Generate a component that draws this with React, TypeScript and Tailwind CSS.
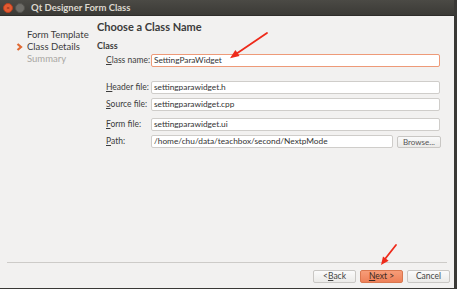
import React from 'react';

const font = { fontFamily: 'Lato, "Noto Sans", "DejaVu Sans", sans-serif' };

const Mn: React.FC<{ k: string; rest: string }> = ({ k, rest }) => (
  <span>
    <span className="underline underline-offset-1">{k}</span>
    {rest}
  </span>
);

interface RowProps {
  label: React.ReactNode;
  value: string;
  focused?: boolean;
  mt: string;
  short?: boolean;
}

const Row: React.FC<RowProps> = ({ label, value, focused, mt, short }) => (
  <div className={`flex items-center h-[13px] ${mt}`}>
    <div className="w-[54px] pl-[9px] text-[8.5px] text-[#3c3c3c] leading-none whitespace-nowrap">{label}</div>
    <div
      className={`h-[13px] flex items-center pl-[2px] bg-white rounded-[2px] text-[8.3px] text-[#333] leading-none whitespace-nowrap overflow-hidden ${
        short ? 'w-[242px]' : 'w-[289px]'
      } ${focused ? 'border border-[#ee9a78]' : 'border border-[#cfcdca]'}`}
    >
      {value}
    </div>
    {short && (
      <div className="ml-[4px] w-[44px] h-[12px] flex items-center justify-center rounded-[2px] border border-[#c9c7c4] bg-gradient-to-b from-[#fafafa] to-[#ebeae8] text-[8px] text-[#555] leading-none">
        Browse...
      </div>
    )}
  </div>
);

const Btn: React.FC<{ children: React.ReactNode; primary?: boolean }> = ({ children, primary }) => (
  <div
    className={`w-[43px] h-[13px] flex items-center justify-center rounded-[2px] text-[8.5px] leading-none ${
      primary
        ? 'border border-[#d9774f] bg-gradient-to-b from-[#f79c78] to-[#ee8159] text-[#3a2a22]'
        : 'border border-[#c9c7c4] bg-gradient-to-b from-[#fbfbfb] to-[#ebeae8] text-[#444]'
    }`}
  >
    {children}
  </div>
);

export default function App() {
  return (
    <div className="w-[457px] h-[289px] bg-[#3a3936] relative overflow-hidden" style={font}>
      <div className="w-[454px] h-[288px] flex flex-col bg-[#f2f1f0]">
        {/* title bar */}
        <div className="h-[16px] flex items-center bg-gradient-to-b from-[#4b4a45] to-[#3b3a36] border-b border-[#2e2d2a]">
          <div className="ml-[3px] w-[10px] h-[10px] rounded-full bg-[#e45b32] border border-[#b8401f] flex items-center justify-center text-[6px] text-[#6b2010] leading-none">
            ×
          </div>
          <div className="ml-[2px] w-[10px] h-[10px] rounded-full bg-[#6e6d68] border border-[#55544f]" />
          <div className="ml-[6px] text-[9.5px] font-bold text-[#dcd8cf] leading-none">Qt Designer Form Class</div>
        </div>

        <div className="flex flex-1">
          {/* side list */}
          <div className="w-[97px] pt-[13px] text-[9.5px] leading-[12px]">
            <div className="pl-[27px] text-[#3c3c3c]">Form Template</div>
            <div className="flex items-center text-[#3c3c3c]">
              <svg width="27" height="12" viewBox="0 0 27 12">
                <path d="M17.5 3 L21 6 L17.5 9" fill="none" stroke="#e06a33" strokeWidth="2.2" />
              </svg>
              Class Details
            </div>
            <div className="pl-[27px] text-[#a9a7a3]">Summary</div>
          </div>

          {/* content */}
          <div className="flex-1 pt-[4px]">
            <div className="text-[11px] font-bold text-[#3c3c3c] leading-[14px]">Choose a Class Name</div>
            <div className="mt-[6px] text-[9px] font-bold text-[#3c3c3c] leading-[12px]">Class</div>
            <Row mt="mt-[2px]" label={<Mn k="C" rest="lass name:" />} value="SettingParaWidget" focused />
            <Row mt="mt-[14px]" label={<Mn k="H" rest="eader file:" />} value="settingparawidget.h" />
            <Row mt="mt-[4px]" label={<Mn k="S" rest="ource file:" />} value="settingparawidget.cpp" />
            <Row mt="mt-[7px]" label={<Mn k="F" rest="orm file:" />} value="settingparawidget.ui" />
            <Row mt="mt-[4px]" label={<Mn k="P" rest="ath:" />} value="/home/chu/data/teachbox/second/NextpMode" short />
          </div>
        </div>

        {/* footer */}
        <div className="mx-[7px] h-px bg-[#cdcbc8]" />
        <div className="h-[25px] flex items-start justify-end gap-[4px] pt-[7px] pr-[4px]">
          <Btn>
            {'< '}
            <Mn k="B" rest="ack" />
          </Btn>
          <Btn primary>
            <Mn k="N" rest="ext >" />
          </Btn>
          <Btn>Cancel</Btn>
        </div>
      </div>

      {/* annotation arrows */}
      <svg className="absolute left-0 top-0 pointer-events-none" width="457" height="289" viewBox="0 0 457 289">
        <path d="M267 33 L236 54" stroke="#ee2a1a" strokeWidth="1.8" strokeLinecap="round" />
        <polygon points="230,58.3 239.6,55.9 235.4,50.1" fill="#ee2a1a" />
        <path d="M396 245 L385 259" stroke="#ee2a1a" strokeWidth="1.8" strokeLinecap="round" />
        <polygon points="381,265 388.6,260.7 383,256.5" fill="#ee2a1a" />
      </svg>
    </div>
  );
}
